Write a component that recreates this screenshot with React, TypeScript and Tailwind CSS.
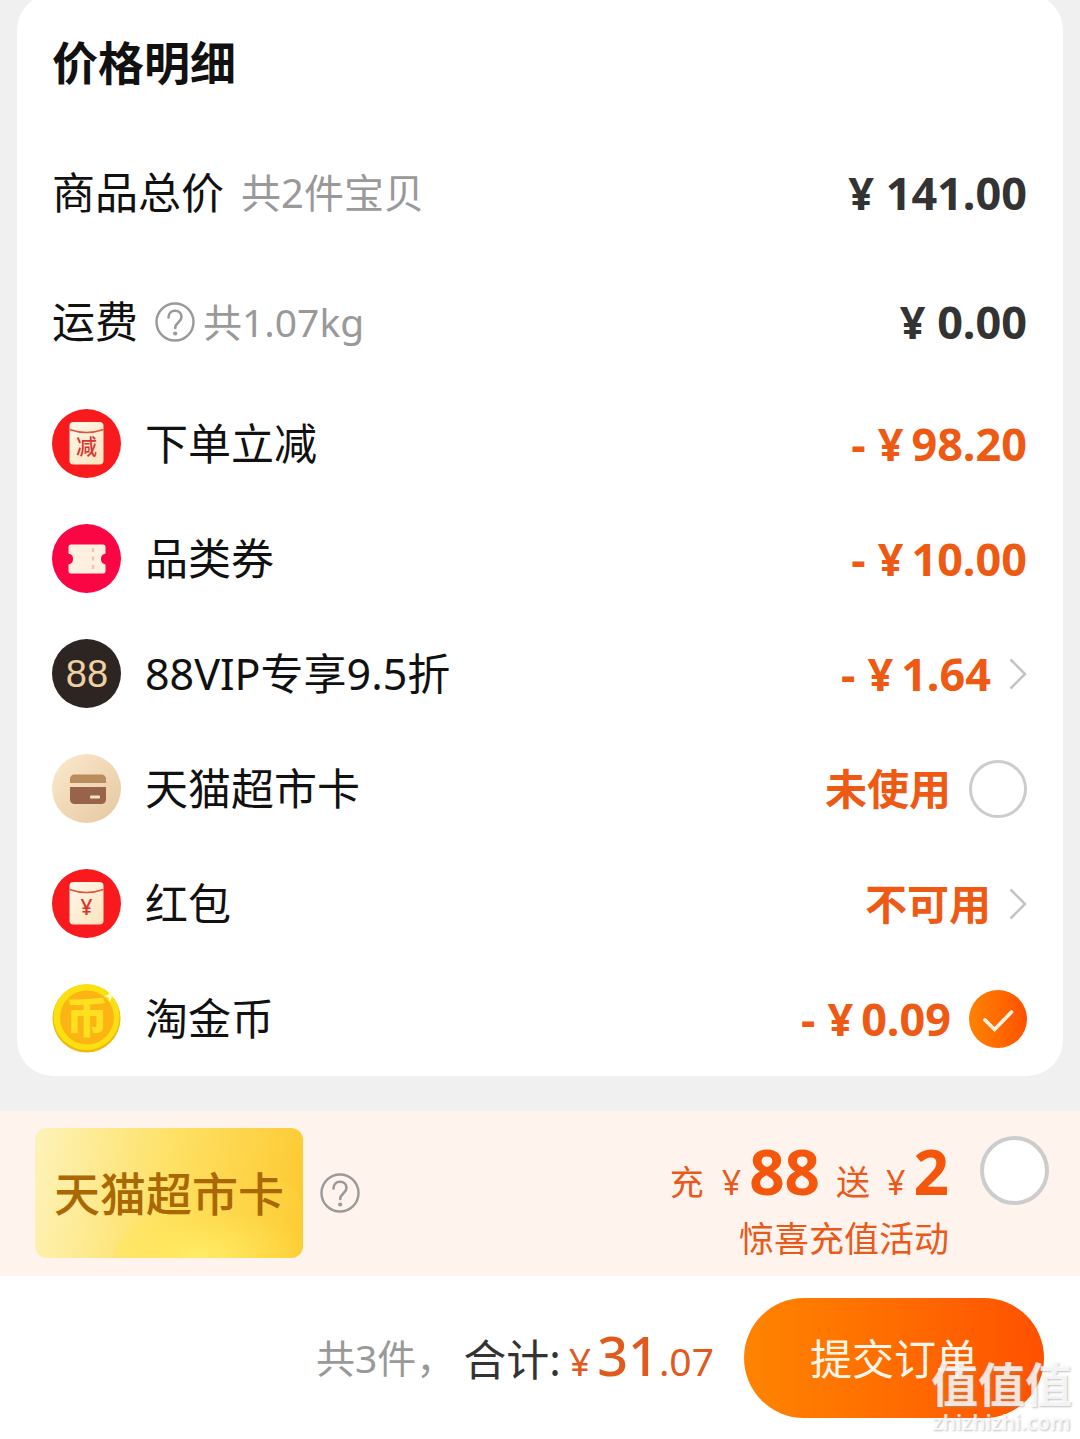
import { useState } from "react";
import type { ReactNode } from "react";

function HelpIcon() {
  return (
    <svg viewBox="0 0 40 40" className="size-10" fill="none" stroke="#999999">
      <circle cx="20" cy="20" r="18.5" strokeWidth="2.4" />
      <path
        d="M13.500 15.500c0-4 2.800-6.800 6.500-6.800s6.500 2.600 6.500 6.300c0 5-6.300 5.500-6.300 11"
        strokeWidth="2.6"
        strokeLinecap="round"
      />
      <circle cx="20.200" cy="31.500" r="2.100" fill="#999999" stroke="none" />
    </svg>
  );
}

function Chevron() {
  return (
    <svg viewBox="0 0 18 32" className="h-8 w-[18px]" fill="none">
      <path d="M1.5 1.5 16 16 1.5 30.5" stroke="#c4c4c4" strokeWidth="2.6" />
    </svg>
  );
}

function Envelope({ mark, size, y }: { mark: string; size: number; y: number }) {
  return (
    <svg viewBox="0 0 69 69" className="size-[69px] shrink-0">
      <defs>
        <linearGradient id="paper" x1="0" y1="0" x2="1" y2="1">
          <stop offset="0" stopColor="#fff8ec" />
          <stop offset="1" stopColor="#fde3ba" />
        </linearGradient>
      </defs>
      <circle cx="34.5" cy="34.5" r="34.5" fill="#f91a1d" />
      <rect x="17.5" y="13" width="34" height="42.5" rx="4" fill="url(#paper)" />
      <path d="M17.5 20.5Q34.5 26.5 51.5 20.5" fill="none" stroke="#e0533f" strokeWidth="1.6" />
      <text
        x="34.5"
        y={y}
        fontSize={size}
        textAnchor="middle"
        fill="#d8342f"
        className="font-medium"
      >
        {mark}
      </text>
    </svg>
  );
}

function TicketIcon() {
  return (
    <svg viewBox="0 0 69 69" className="size-[69px] shrink-0">
      <circle cx="34.5" cy="34.5" r="34.5" fill="#fb0644" />
      <path
        d="M19 20.5H51a2.5 2.5 0 0 1 2.5 2.5v6.500a5.600 5.600 0 0 0 0 11V47a2.500 2.500 0 0 1-2.500 2.500H19a2.500 2.500 0 0 1-2.500-2.500v-6.500a5.600 5.600 0 0 0 0-11V23a2.500 2.500 0 0 1 2.500-2.500Z"
        fill="#fff0e2"
      />
      <path d="M41 24v24" stroke="#f6c3ad" strokeWidth="2.4" strokeDasharray="4 4.5" />
    </svg>
  );
}

function VipIcon() {
  return (
    <svg viewBox="0 0 69 69" className="size-[69px] shrink-0">
      <circle cx="34.5" cy="34.5" r="34.5" fill="#2d2522" />
      <text
        x="35"
        y="48"
        fontSize="38"
        textAnchor="middle"
        fill="#efcfa4"
        className="font-['Liberation_Sans',sans-serif]"
      >
        88
      </text>
    </svg>
  );
}

function CardIcon() {
  return (
    <svg viewBox="0 0 69 69" className="size-[69px] shrink-0">
      <defs>
        <linearGradient id="sand" x1="0" y1="0" x2="1" y2="1">
          <stop offset="0" stopColor="#fbe9cd" />
          <stop offset="1" stopColor="#e6c7a0" />
        </linearGradient>
      </defs>
      <circle cx="34.5" cy="34.5" r="34.5" fill="url(#sand)" />
      <path d="M18 29v-4a4.500 4.500 0 0 1 4.500-4.500h27A4.500 4.500 0 0 1 54 25v4Z" fill="#b88c5c" />
      <path d="M18 33h36v12.500a4.500 4.500 0 0 1-4.500 4.500h-27a4.500 4.500 0 0 1-4.500-4.500Z" fill="#98634a" />
      <rect x="38" y="41.500" width="10" height="3" rx="1" fill="#fbe3c8" />
    </svg>
  );
}

function CoinIcon() {
  return (
    <svg viewBox="0 0 69 69" className="size-[69px] shrink-0">
      <circle cx="34.5" cy="34.5" r="34" fill="#efb90f" />
      <circle cx="34.5" cy="33" r="33" fill="#fbe011" />
      <circle cx="35" cy="33.500" r="27" fill="#fbb413" />
      <text x="35" y="49" fontSize="42" textAnchor="middle" fill="#ffdf1f" className="font-black">
        币
      </text>
      <path d="m58 6 1.500 4.500L64 12l-4.500 1.500L58 18l-1.500-4.500L52 12l4.500-1.500Z" fill="#fff9c9" />
    </svg>
  );
}

function RoundCheck({ id, on, onChange }: { id: string; on: boolean; onChange: () => void }) {
  return (
    <span className="relative block size-[58px] shrink-0">
      <input
        id={id}
        type="checkbox"
        checked={on}
        onChange={onChange}
        className="block size-full appearance-none rounded-full border-[3px] border-[#cccccc] bg-white checked:border-0 checked:bg-linear-to-r checked:from-[#ff8200] checked:to-[#ff5000]"
      />
      {on && (
        <svg viewBox="0 0 58 58" className="pointer-events-none absolute inset-0 size-full" fill="none">
          <path d="m16 30 9.500 9.500 17-17.500" stroke="#fff3e0" strokeWidth="3.6" strokeLinecap="round" />
        </svg>
      )}
    </span>
  );
}

function Discount({ amount }: { amount: string }) {
  return (
    <span className="flex gap-2 text-[45px]">
      <span className="pr-1">-</span>
      <span>¥</span>
      <span>{amount}</span>
    </span>
  );
}

function Row({ icon, label, htmlFor, children }: {
  icon: ReactNode;
  label: string;
  htmlFor?: string;
  children: ReactNode;
}) {
  return (
    <li className="flex items-center py-[23px]">
      {icon}
      {htmlFor ? (
        <label htmlFor={htmlFor} className="ml-6 text-[43px] leading-[60px] text-[#111111]">{label}</label>
      ) : (
        <span className="ml-6 text-[43px] leading-[60px] text-[#111111]">{label}</span>
      )}
      <div className="ml-auto flex items-center gap-[18px] text-[42px] leading-[60px] font-bold text-[#ee5a14]">
        {children}
      </div>
    </li>
  );
}

export default function App() {
  const [card, setCard] = useState(false);
  const [coin, setCoin] = useState(true);
  const [topUp, setTopUp] = useState(false);

  return (
    <div className="relative overflow-hidden bg-[#f0f0f0] font-['Noto_Sans','Noto_Sans_CJK_SC',sans-serif]">
      {/* Price details */}
      <main className="mx-[17px] -mt-1.5 mb-[35px] rounded-[36px] bg-white pt-1.5 pr-9 pl-[35px]">
        <h1 className="pt-[34px] pb-[37px] text-[46px] leading-[57px] font-bold text-[#111111]">价格明细</h1>

        <div className="flex items-center py-9 leading-[57px]">
          <span className="text-[43px] text-[#111111]">商品总价</span>
          <span className="ml-[17px] text-[40px] text-[#999999]">共2件宝贝</span>
          <span className="ml-auto text-[45px] font-bold text-[#333333]">¥ 141.00</span>
        </div>

        <div className="flex items-center py-9 leading-[57px]">
          <span className="text-[43px] text-[#111111]">运费</span>
          <button type="button" aria-label="运费说明" className="ml-[17px]">
            <HelpIcon />
          </button>
          <span className="ml-2 text-[39px] text-[#999999]">共1.07kg</span>
          <span className="ml-auto text-[45px] font-bold text-[#333333]">¥ 0.00</span>
        </div>

        <ul>
          <Row icon={<Envelope mark="减" size={21} y={45} />} label="下单立减">
            <Discount amount="98.20" />
          </Row>
          <Row icon={<TicketIcon />} label="品类券">
            <Discount amount="10.00" />
          </Row>
          <Row icon={<VipIcon />} label="88VIP专享9.5折">
            <button type="button" className="flex items-center gap-[18px]">
              <Discount amount="1.64" />
              <Chevron />
            </button>
          </Row>
          <Row icon={<CardIcon />} label="天猫超市卡" htmlFor="card">
            <span>未使用</span>
            <RoundCheck id="card" on={card} onChange={() => setCard(!card)} />
          </Row>
          <Row icon={<Envelope mark="¥" size={21} y={46} />} label="红包">
            <button type="button" className="flex items-center gap-[18px]">
              <span>不可用</span>
              <Chevron />
            </button>
          </Row>
          <Row icon={<CoinIcon />} label="淘金币" htmlFor="coin">
            <Discount amount="0.09" />
            <RoundCheck id="coin" on={coin} onChange={() => setCoin(!coin)} />
          </Row>
        </ul>
      </main>

      {/* Top-up offer */}
      <section className="flex items-start bg-[#fff3ee] pt-[17px] pr-[31px] pb-3 pl-[35px]">
        <div className="flex items-center gap-[17px]">
          <div className="relative flex h-[130px] w-[268px] items-center justify-center overflow-hidden rounded-xl bg-linear-[100deg] from-[#fdf3ba] via-[#fee063] to-[#fdc82f]">
            <svg viewBox="0 0 268 130" className="absolute inset-0 size-full">
              <defs>
                <radialGradient id="shine" cx="0.45" cy="0.95" r="0.6">
                  <stop offset="0" stopColor="#ffec66" />
                  <stop offset="1" stopColor="#ffe34e" stopOpacity="0.15" />
                </radialGradient>
              </defs>
              <path d="M78 130C84 92 124 72 176 73c36 0 42-20 66-20 18 0 25 14 25 44v33Z" fill="url(#shine)" />
            </svg>
            <span className="relative text-[46px] leading-[60px] font-medium text-[#a96804]">天猫超市卡</span>
          </div>
          <button type="button" aria-label="超市卡说明">
            <HelpIcon />
          </button>
        </div>

        <div className="ml-auto flex items-start gap-[31px]">
          <label htmlFor="topup" className="flex flex-col items-end text-[#e8591a]">
            <span className="flex items-baseline text-[34px] leading-[50px]">
              充
              <span className="ml-[18px]">¥</span>
              <b className="ml-2 text-[62px] leading-[86px] text-[#f4560b]">88</b>
              <span className="ml-4">送</span>
              <span className="ml-4">¥</span>
              <b className="ml-2 text-[62px] leading-[86px] text-[#f4560b]">2</b>
            </span>
            <span className="text-[35px] leading-[50px]">惊喜充值活动</span>
          </label>
          <input
            id="topup"
            type="checkbox"
            checked={topUp}
            onChange={() => setTopUp(!topUp)}
            className="mt-2 block size-[69px] appearance-none rounded-full border-4 border-[#cccccc] bg-white checked:bg-[#ff6000]"
          />
        </div>
      </section>

      {/* Submit bar */}
      <footer className="flex items-center justify-end bg-white pt-[22px] pr-9 pb-[21px]">
        <span className="text-[39px] leading-[60px] text-[#999999]">共3件，</span>
        <p className="ml-2 flex items-baseline leading-[60px] text-[#e05a1e]">
          <span className="text-[43px] text-[#333333]">合计:</span>
          <span className="ml-2 text-[39px]">¥</span>
          <span className="ml-1.5 text-[54px] font-medium">31</span>
          <span className="text-[39px]">.07</span>
        </p>
        <button
          type="button"
          className="ml-[30px] h-[120px] w-[300px] rounded-full bg-linear-to-r from-[#ff8400] to-[#ff5000] text-[42px] text-[#fff6ea]"
        >
          提交订单
        </button>
      </footer>

      <div className="pointer-events-none absolute right-2 bottom-1 flex flex-col items-center text-white/80 [text-shadow:1px_1px_2px_#99999999]">
        <span className="text-[47px] leading-[50px] font-bold">值值值</span>
        <span className="text-[21px] leading-[26px] font-semibold">zhizhizhi.com</span>
      </div>
    </div>
  );
}
